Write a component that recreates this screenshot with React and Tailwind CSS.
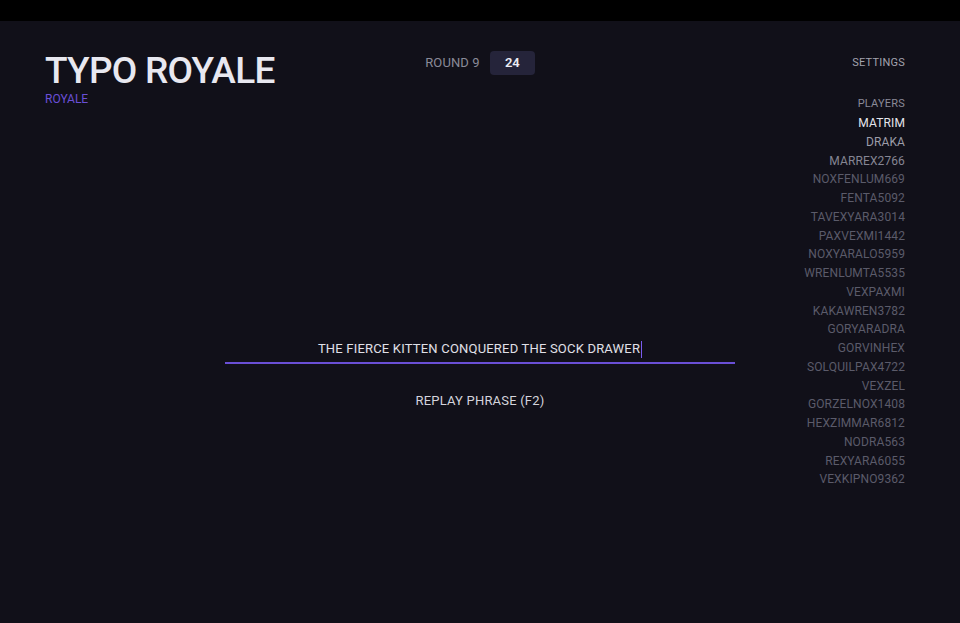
const players = [
  { name: 'MATRIM', tone: 'text-[#e4e4ec]' },
  { name: 'DRAKA', tone: 'text-[#9c9ca8]' },
  { name: 'MARREX2766', tone: 'text-[#858593]' },
  { name: 'NOXFENLUM669', tone: 'text-[#5b5b6a]' },
  { name: 'FENTA5092', tone: 'text-[#5b5b6a]' },
  { name: 'TAVEXYARA3014', tone: 'text-[#5b5b6a]' },
  { name: 'PAXVEXMI1442', tone: 'text-[#5b5b6a]' },
  { name: 'NOXYARALO5959', tone: 'text-[#5b5b6a]' },
  { name: 'WRENLUMTA5535', tone: 'text-[#5b5b6a]' },
  { name: 'VEXPAXMI', tone: 'text-[#5b5b6a]' },
  { name: 'KAKAWREN3782', tone: 'text-[#5b5b6a]' },
  { name: 'GORYARADRA', tone: 'text-[#5b5b6a]' },
  { name: 'GORVINHEX', tone: 'text-[#5b5b6a]' },
  { name: 'SOLQUILPAX4722', tone: 'text-[#5b5b6a]' },
  { name: 'VEXZEL', tone: 'text-[#5b5b6a]' },
  { name: 'GORZELNOX1408', tone: 'text-[#5b5b6a]' },
  { name: 'HEXZIMMAR6812', tone: 'text-[#5b5b6a]' },
  { name: 'NODRA563', tone: 'text-[#5b5b6a]' },
  { name: 'REXYARA6055', tone: 'text-[#5b5b6a]' },
  { name: 'VEXKIPNO9362', tone: 'text-[#5b5b6a]' },
];

function PlayerList() {
  return (
    <div className="mt-[23px] flex flex-col items-end">
      <p className="text-[11px] leading-[18px] tracking-[0.02em] text-[#8a8a98]">PLAYERS</p>
      <ul className="mt-[1px] flex flex-col items-end">
        {players.map((player) => (
          <li key={player.name} className={`text-[12px] leading-[18.75px] tracking-[0.01em] ${player.tone}`}>
            {player.name}
          </li>
        ))}
      </ul>
    </div>
  );
}

export default function App() {
  return (
    <div className="min-h-screen bg-[#111019] font-['Roboto','Liberation_Sans',sans-serif]">
      <div className="h-[21px] bg-black" />
      <div className="grid grid-cols-[180px_510px_1fr] pl-[45px] pr-[55px] pt-[30px]">
        <div>
          <h1 className="whitespace-nowrap text-[37px] font-medium leading-[40px] tracking-[-0.02em] text-[#e8e8f0]">TYPO ROYALE</h1>
          <p className="mt-[1px] text-[12px] leading-[14px] text-[#6a4fd6]">ROYALE</p>
        </div>

        <div className="flex flex-col">
          <div className="flex items-center justify-center gap-[10px]">
            <span className="text-[13px] tracking-[0.01em] text-[#8a8a98]">ROUND 9</span>
            <span className="flex h-[24px] w-[45px] items-center justify-center rounded-[4px] bg-[#25243a] text-[13px] font-semibold text-[#ececf4]">
              24
            </span>
          </div>

          <div className="mt-[265px] flex flex-col">
            <div className="flex justify-center">
              <span className="text-[13px] leading-[18px] tracking-[0.015em] text-[#e0e0e8]">THE FIERCE KITTEN CONQUERED THE SOCK DRAWER</span>
              <span className="ml-[1px] mt-[1px] h-[17px] w-[1px] bg-[#7a5cf0]" />
            </div>
            <div className="mt-[4px] h-[2px] bg-[#6a4fd6]" />
            <button className="mt-[28px] self-center text-[13px] leading-[18px] tracking-[0.015em] text-[#d4d4dc]">REPLAY PHRASE (F2)</button>
          </div>
        </div>

        <div className="flex flex-col items-end">
          <p className="mt-[3px] text-[11px] leading-[18px] tracking-[0.02em] text-[#a2a2ae]">SETTINGS</p>
          <PlayerList />
        </div>
      </div>
    </div>
  );
}
